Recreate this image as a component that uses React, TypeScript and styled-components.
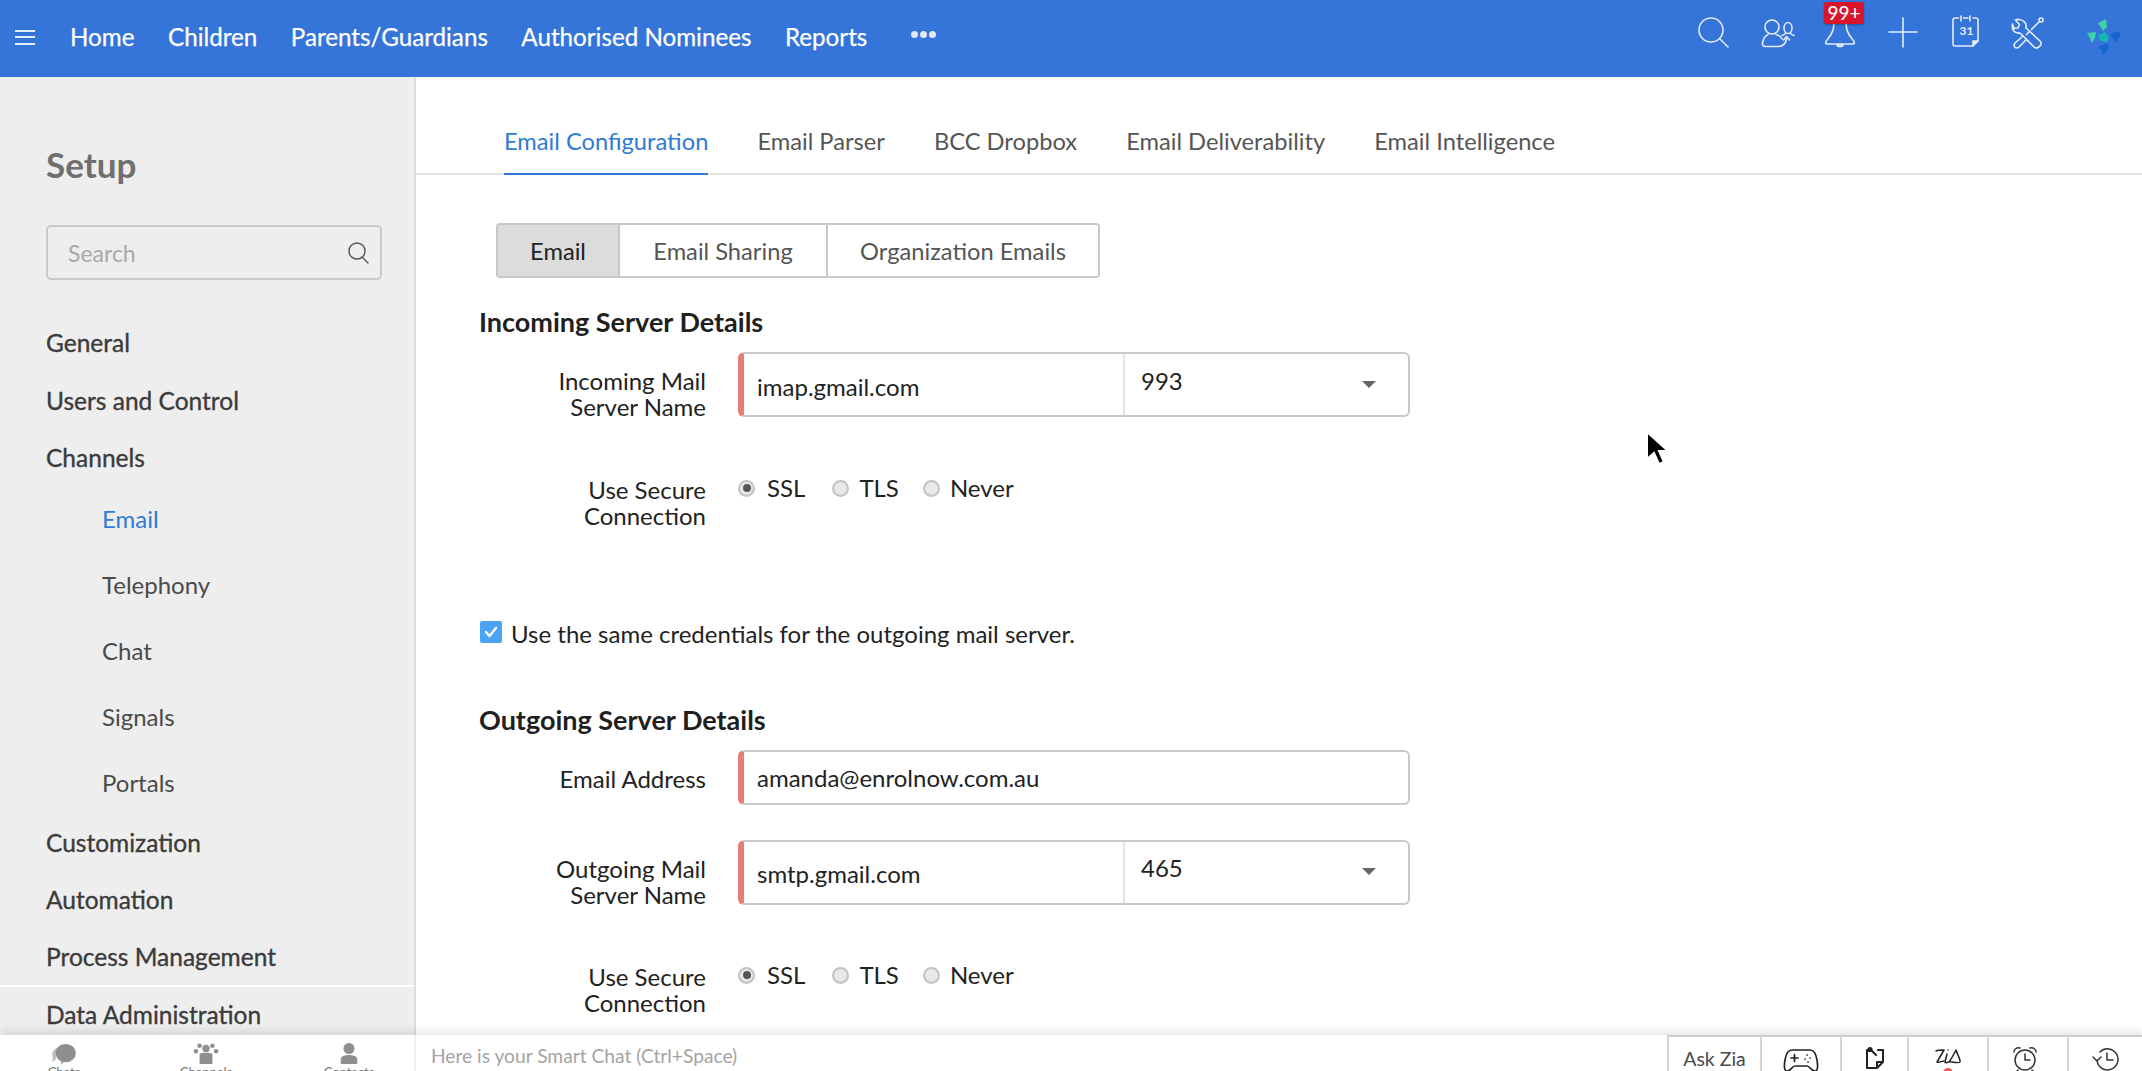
import React from 'react';
import styled, { createGlobalStyle } from 'styled-components';

const Global = createGlobalStyle`
  html, body { margin: 0; padding: 0; height: 100%; overflow: hidden; background: #fff; }
  body { font-family: Lato, "Open Sans", "Liberation Sans", sans-serif; color: #222; }
  * { box-sizing: border-box; }
`;

const Page = styled.div`
  position: relative;
  width: 2142px;
  height: 1071px;
  display: flex;
  flex-direction: column;
  overflow: hidden;
`;

const TopBar = styled.header`
  height: 77px;
  flex: none;
  background: #3574d8;
  display: flex;
  align-items: flex-start;
  color: #fff;
`;
const Burger = styled.div`
  width: 20px;
  height: 15px;
  margin: 30px 0 0 15px;
  border-top: 2px solid #e6eefb;
  border-bottom: 2px solid #e6eefb;
  position: relative;
  &::after {
    content: '';
    position: absolute;
    left: 0;
    right: 0;
    top: 4px;
    height: 2px;
    background: #e6eefb;
  }
`;
const Nav = styled.nav`
  display: flex;
  gap: 33.5px;
  margin: 22px 0 0 35px;
  align-items: center;
  height: 30px;
`;
const NavItem = styled.a`
  font-size: 24.2px;
  line-height: 30px;
  font-weight: 400;
  -webkit-text-stroke: 0.25px #fff;
  color: #fff;
  white-space: nowrap;
`;
const MoreDots = styled.div`
  display: flex;
  gap: 2px;
  margin-left: 10px;
  margin-top: -6px;
`;
const Dot = styled.span`
  width: 7px;
  height: 7px;
  border-radius: 50%;
  background: #dfe8f8;
`;
const TopIcons = styled.div`
  margin-left: auto;
  height: 77px;
  display: flex;
  align-items: flex-start;
`;
const TopIcon = styled.div<{ $w: number; $pl?: number; $pt?: number }>`
  position: relative;
  width: ${p => p.$w}px;
  padding-top: ${p => p.$pt ?? 15}px;
  padding-left: ${p => p.$pl ?? 0}px;
  display: flex;
  justify-content: center;
`;
const Badge = styled.span`
  position: absolute;
  top: 2px;
  left: calc(50% + 4px);
  transform: translateX(-50%);
  width: 40px;
  height: 22px;
  background: #d8152b;
  border-radius: 3px;
  font-size: 19px;
  line-height: 22px;
  font-weight: 500;
  text-align: center;
  color: #fff;
  box-shadow: 0 1px 2px rgba(0, 0, 0, 0.3);
`;

const Body = styled.div`
  flex: 1;
  min-height: 0;
  display: flex;
`;
const Sidebar = styled.aside`
  width: 416px;
  flex: none;
  background: #eeeeee;
  border-right: 2px solid #dcdcdc;
  padding: 65px 0 0 46px;
  overflow: hidden;
  position: relative;
`;
const SetupTitle = styled.h1`
  margin: 0;
  font-size: 35px;
  line-height: 44px;
  font-weight: 700;
  color: #6f6f6f;
`;
const SearchBox = styled.div`
  width: 336px;
  height: 55px;
  margin-top: 39px;
  border: 2px solid #c9c9c9;
  border-radius: 5px;
  display: flex;
  align-items: center;
  justify-content: space-between;
  padding: 0 10px 0 20px;
`;
const SearchHint = styled.span`
  font-size: 23px;
  color: #a8a8a8;
`;
const SideList = styled.div`
  display: flex;
  flex-direction: column;
  margin-top: 34px;
`;
const SideGroup = styled.div<{ $h: number }>`
  height: ${p => p.$h}px;
  line-height: ${p => p.$h}px;
  font-size: 24.5px;
  font-weight: 400;
  -webkit-text-stroke: 0.35px #3b3b3b;
  color: #3b3b3b;
  white-space: nowrap;
`;
const SideChild = styled.div<{ $active?: boolean; $h: number }>`
  height: ${p => p.$h}px;
  line-height: ${p => p.$h}px;
  padding-left: 56px;
  font-size: 24px;
  color: ${p => (p.$active ? '#2f7bd5' : '#4a4a4a')};
`;
const SideRule = styled.div`
  height: 2px;
  background: #fff;
  margin-left: -46px;
  margin-top: 1px;
`;

const Main = styled.main`
  flex: 1;
  min-width: 0;
  overflow: hidden;
  background: #fff;
`;
const Tabs = styled.div`
  height: 98px;
  border-bottom: 2px solid #e4e4e4;
  padding-left: 88px;
  display: flex;
  align-items: flex-end;
  gap: 49px;
`;
const Tab = styled.div<{ $active?: boolean }>`
  height: 66px;
  margin-bottom: -2px;
  line-height: 64px;
  font-size: 23.7px;
  white-space: nowrap;
  color: ${p => (p.$active ? '#2f7bd5' : '#555')};
  border-bottom: 2px solid ${p => (p.$active ? '#2f7bd5' : 'transparent')};
`;
const Form = styled.div`
  padding-left: 63px;
`;
const SubTabs = styled.div`
  display: inline-flex;
  margin: 48px 0 0 17px;
  height: 55px;
  border: 2px solid #c8c8c8;
  border-radius: 4px;
  overflow: hidden;
  vertical-align: top;
`;
const SubTab = styled.div<{ $active?: boolean; $w: number }>`
  width: ${p => p.$w}px;
  line-height: 53px;
  text-align: center;
  font-size: 23.7px;
  color: ${p => (p.$active ? '#222' : '#555')};
  background: ${p => (p.$active ? '#dcdcdc' : '#fff')};
  border-right: 2px solid #c8c8c8;
  &:last-child { border-right: 0; }
`;
const Heading = styled.h2<{ $mt: number }>`
  margin: ${p => p.$mt}px 0 0;
  font-size: 27px;
  line-height: 30px;
  font-weight: 700;
  color: #1f1f1f;
`;
const Row = styled.div<{ $mt: number }>`
  display: grid;
  grid-template-columns: 227px 672px;
  column-gap: 32px;
  margin-top: ${p => p.$mt}px;
`;
const Label = styled.label<{ $pt: number }>`
  display: block;
  text-align: right;
  margin-top: -1px;
  padding-top: ${p => p.$pt}px;
  font-size: 24px;
  line-height: 26px;
  color: #222;
`;
const Field = styled.div<{ $h: number }>`
  height: ${p => p.$h}px;
  display: flex;
  background: #fff;
  border: 2px solid #c6cacd;
  border-left: 6px solid #e87d78;
  border-radius: 6px;
  overflow: hidden;
  font-size: 24px;
  color: #222;
`;
const FieldText = styled.div<{ $pt: number }>`
  flex: 1;
  min-width: 0;
  padding: ${p => p.$pt}px 0 0 13px;
  line-height: 28px;
`;
const PortSelect = styled.div<{ $pt: number }>`
  width: 285px;
  flex: none;
  border-left: 2px solid #e4e4e4;
  padding: ${p => p.$pt}px 0 0 16px;
  line-height: 28px;
  position: relative;
`;
const Caret = styled.span<{ $top: number }>`
  position: absolute;
  right: 32px;
  top: ${p => p.$top}px;
  width: 0;
  height: 0;
  border-left: 7px solid transparent;
  border-right: 7px solid transparent;
  border-top: 7px solid #666;
`;
const Radios = styled.div`
  display: flex;
  align-items: center;
  height: 20px;
`;
const RadioDot = styled.span<{ $on?: boolean; $ml: number }>`
  width: 17px;
  height: 17px;
  margin-left: ${p => p.$ml}px;
  border-radius: 50%;
  border: 2px solid #c3c3c3;
  background: #e9e9e9;
  box-shadow: inset 0 -1px 1px rgba(0, 0, 0, 0.06);
  flex: none;
  position: relative;
  ${p =>
    p.$on
      ? `&::after { content: ''; position: absolute; left: 2.5px; top: 2.5px; width: 8px; height: 8px; border-radius: 50%; background: #555; }`
      : ''}
`;
const RadioText = styled.span<{ $ml: number }>`
  margin-left: ${p => p.$ml}px;
  font-size: 24px;
  line-height: 20px;
  color: #222;
`;
const CheckRow = styled.div`
  display: flex;
  align-items: center;
  margin-top: 91px;
  height: 26px;
`;
const CheckBox = styled.span`
  width: 22px;
  height: 22px;
  background: #4ba3f5;
  border-radius: 2px;
  display: flex;
  align-items: center;
  justify-content: center;
  margin: -2px 9px 0 1px;
`;
const CheckText = styled.span`
  font-size: 24px;
  color: #222;
`;

const Footer = styled.footer`
  height: 36px;
  flex: none;
  display: flex;
  background: #fff;
  overflow: hidden;
  position: relative;
  box-shadow: 0 -4px 8px rgba(0, 0, 0, 0.1);
`;
const FooterTabs = styled.div`
  width: 416px;
  flex: none;
  border-right: 2px solid #f0f0f0;
  display: grid;
  grid-template-columns: 128px 156px 130px;
`;
const FooterTab = styled.div`
  display: flex;
  flex-direction: column;
  align-items: center;
  padding-top: 8px;
  font-size: 13px;
  line-height: 14px;
  color: #777;
`;
const ChatHint = styled.div`
  flex: 1;
  padding: 8px 0 0 15px;
  font-size: 19.2px;
  line-height: 26px;
  color: #a3a3a3;
`;
const FooterCell = styled.div<{ $w: number; $pt?: number; $pr?: number }>`
  width: ${p => p.$w}px;
  flex: none;
  border-left: 2px solid #d4d4d4;
  border-top: 2px solid #cfcfcf;
  display: flex;
  justify-content: center;
  padding-top: ${p => p.$pt ?? 9}px;
  padding-right: ${p => p.$pr ?? 0}px;
  font-size: 19.5px;
  line-height: 26px;
  color: #4a4a4a;
  position: relative;
`;
const RedDot = styled.span`
  position: absolute;
  left: 50%;
  bottom: -3px;
  margin-left: -4px;
  width: 8px;
  height: 6px;
  border-radius: 50%;
  background: #ea5a5a;
`;
const Cursor = styled.svg`
  position: absolute;
  left: 1644px;
  top: 429px;
`;

const Stroke: React.FC<{ w?: number; h?: number; vb?: string; sw?: number; c?: string; children: React.ReactNode }> = ({
  w = 32, h = 32, vb = '0 0 32 32', sw = 1.6, c = '#e3ecfa', children,
}) => (
  <svg width={w} height={h} viewBox={vb} fill="none" stroke={c} strokeWidth={sw} strokeLinecap="round" strokeLinejoin="round" overflow="visible">
    {children}
  </svg>
);

const FieldRow: React.FC<{ label: React.ReactNode; value: string; port?: string; h: number; tp: number; pp?: number; cp?: number }> = ({
  label, value, port, h, tp, pp = 0, cp = 0,
}) => (
  <>
    <Label $pt={17}>{label}</Label>
    <Field $h={h}>
      <FieldText $pt={tp}>{value}</FieldText>
      {port && (
        <PortSelect $pt={pp}>
          {port}
          <Caret $top={cp} />
        </PortSelect>
      )}
    </Field>
  </>
);

const SecureRow: React.FC<{ mt: number }> = ({ mt }) => (
  <Row $mt={mt}>
    <Label $pt={0}>Use Secure<br />Connection</Label>
    <Radios>
      <RadioDot $on $ml={0} /><RadioText $ml={12}>SSL</RadioText>
      <RadioDot $ml={27} /><RadioText $ml={10}>TLS</RadioText>
      <RadioDot $ml={24} /><RadioText $ml={10}>Never</RadioText>
    </Radios>
  </Row>
);

export default function App() {
  return (
    <Page>
      <Global />
      <TopBar>
        <Burger />
        <Nav>
          <NavItem>Home</NavItem>
          <NavItem>Children</NavItem>
          <NavItem>Parents/Guardians</NavItem>
          <NavItem>Authorised Nominees</NavItem>
          <NavItem>Reports</NavItem>
          <MoreDots><Dot /><Dot /><Dot /></MoreDots>
        </Nav>
        <TopIcons>
          <TopIcon $w={64}>
            <Stroke><circle cx="14" cy="15" r="12" /><path d="M23 24l8 8" /></Stroke>
          </TopIcon>
          <TopIcon $w={64}>
            <Stroke>
              <circle cx="11" cy="12" r="7" />
              <path d="M7 19.500C4 21 2 25 1.500 28C1 31 3 31.500 5 31.500H17C22 31.500 24.500 29 25.500 24" />
              <path d="M15 19.500C17.500 20 20 22 21 24M22.500 25l3-3.500 3 3.500" />
              <ellipse cx="27" cy="13" rx="4" ry="5.500" />
              <path d="M24.500 18c-.5 1-2 2-3.500 2.500M29.500 18c.5 1 2 2 3.500 2.500" />
            </Stroke>
          </TopIcon>
          <TopIcon $w={62}>
            <Stroke>
              <path d="M10 5C10 14 9 18 3 25C1 27 1 29 4 29H28C31 29 31 27 29 25C23 18 22 14 22 5" />
              <path d="M13 30c.5 2 5.500 2 6 0z" fill="#e3ecfa" />
            </Stroke>
            <Badge>99+</Badge>
          </TopIcon>
          <TopIcon $w={63}>
            <Stroke><path d="M16 3v29M2 17h28" /></Stroke>
          </TopIcon>
          <TopIcon $w={62}>
            <Stroke>
              <path d="M9.500 3H6C4.500 3 4 4 4 5V29C4 30.500 5 31 6 31H24L29 26V5C29 4 28 3 27 3H24M14.500 3H19M12 1v5M21 1v5" />
              <path d="M24 31V26H29" fill="#e3ecfa" />
              <text x="10.500" y="20" fontFamily="Lato, sans-serif" fontSize="12" fontWeight="700" fill="#e3ecfa" stroke="none">31</text>
            </Stroke>
          </TopIcon>
          <TopIcon $w={62}>
            <Stroke>
              <path d="M13 6.500C10 4 6 4 4.500 5L8.500 9.500 7 13 3 13.500 1.500 9C.5 14 3 19 9 18L23 32C26 35 32 30 29.500 26.500L15 13C15.500 10 15 8 13 6.500Z" />
              <path d="M20.500 14.500L28.500 6.500M18 17l-2.500 2.500M12 21L4 28C1.500 31 5 35 8 32L15.500 24.500" />
              <circle cx="30" cy="5" r="2" />
            </Stroke>
          </TopIcon>
          <TopIcon $w={84} $pl={10} $pt={10}>
            <svg width="50" height="50" viewBox="0 0 50 50">
              <polygon points="18,13 26,9 27,17 23,21 20,16" fill="#3ed4a8" />
              <polygon points="7,23 16,22 15,28 12,33 10,28" fill="#3ed4a8" />
              <polygon points="18,25 25,22 29,27 27,33 20,30" fill="#17b4b8" />
              <polygon points="30,25 38,21 41,25 35,33 33,28" fill="#1565cc" />
              <polygon points="18,37 27,33 29,38 23,45 22,40" fill="#1565cc" />
            </svg>
          </TopIcon>
        </TopIcons>
      </TopBar>
      <Body>
        <Sidebar>
          <SetupTitle>Setup</SetupTitle>
          <SearchBox>
            <SearchHint>Search</SearchHint>
            <Stroke w={24} h={24} vb="0 0 24 24" sw={1.4} c="#555">
              <circle cx="11" cy="10" r="8" /><path d="M16 16l6 6" />
            </Stroke>
          </SearchBox>
          <SideList>
            <SideGroup $h={57}>General</SideGroup>
            <SideGroup $h={59}>Users and Control</SideGroup>
            <SideGroup $h={56}>Channels</SideGroup>
            <SideChild $active $h={66}>Email</SideChild>
            <SideChild $h={66}>Telephony</SideChild>
            <SideChild $h={66}>Chat</SideChild>
            <SideChild $h={66}>Signals</SideChild>
            <SideChild $h={66}>Portals</SideChild>
            <SideGroup $h={54}>Customization</SideGroup>
            <SideGroup $h={60}>Automation</SideGroup>
            <SideGroup $h={54}>Process Management</SideGroup>
            <SideRule />
            <SideGroup $h={56}>Data Administration</SideGroup>
          </SideList>
        </Sidebar>
        <Main>
          <Tabs>
            <Tab $active>Email Configuration</Tab>
            <Tab>Email Parser</Tab>
            <Tab>BCC Dropbox</Tab>
            <Tab>Email Deliverability</Tab>
            <Tab>Email Intelligence</Tab>
          </Tabs>
          <Form>
            <SubTabs>
              <SubTab $active $w={122}>Email</SubTab>
              <SubTab $w={208}>Email Sharing</SubTab>
              <SubTab $w={270}>Organization Emails</SubTab>
            </SubTabs>
            <Heading $mt={29}>Incoming Server Details</Heading>
            <Row $mt={15}>
              <FieldRow label={<>Incoming Mail<br />Server Name</>} value="imap.gmail.com" port="993" h={65} tp={19} pp={13} cp={27} />
            </Row>
            <SecureRow mt={58} />
            <CheckRow>
              <CheckBox>
                <Stroke w={14} h={14} vb="0 0 14 14" sw={2.4} c="#fff"><path d="M2 7l3.500 4L12 3" /></Stroke>
              </CheckBox>
              <CheckText>Use the same credentials for the outgoing mail server.</CheckText>
            </CheckRow>
            <Heading $mt={59}>Outgoing Server Details</Heading>
            <Row $mt={15}>
              <FieldRow label="Email Address" value="amanda@enrolnow.com.au" h={55} tp={12} />
            </Row>
            <Row $mt={35}>
              <FieldRow label={<>Outgoing Mail<br />Server Name</>} value="smtp.gmail.com" port="465" h={65} tp={18} pp={12} cp={26} />
            </Row>
            <SecureRow mt={57} />
          </Form>
        </Main>
      </Body>
      <Footer>
        <FooterTabs>
          <FooterTab>
            <svg width="30" height="22" viewBox="0 0 30 24">
              <path d="M8 5C3 7 1 11 3 16l-1 5 4-3z" fill="#bdbdbd" />
              <path d="M17 1a11 10 0 0 1 0 20l-3 0-2 3 0-4A11 10 0 0 1 17 1z" fill="#8f8f8f" />
            </svg>
            Chats
          </FooterTab>
          <FooterTab>
            <svg width="30" height="22" viewBox="0 0 30 24" fill="#8f8f8f">
              <circle cx="8" cy="3" r="2.500" /><circle cx="22" cy="3" r="2.500" />
              <circle cx="15" cy="6" r="4" />
              <path d="M8 12c0-2 14-2 14 0v11H8z" />
              <circle cx="4" cy="9" r="2.500" /><circle cx="26" cy="9" r="2.500" />
            </svg>
            Channels
          </FooterTab>
          <FooterTab>
            <svg width="30" height="22" viewBox="0 0 30 24" fill="#8f8f8f">
              <circle cx="15" cy="6" r="6" />
              <path d="M6 23v-5c0-4 5-5 9-5s9 1 9 5v5z" />
            </svg>
            Contacts
          </FooterTab>
        </FooterTabs>
        <ChatHint>Here is your Smart Chat (Ctrl+Space)</ChatHint>
        <FooterCell $w={93}>Ask Zia</FooterCell>
        <FooterCell $w={80} $pt={10}>
          <Stroke w={36} h={26} vb="0 0 36 26" sw={1.700} c="#222">
            <path d="M9 3h18c4 0 6 4 7 10 1 6 1 11-2 11-4 0-5-5-8-5H12c-3 0-4 5-8 5-3 0-3-5-2-11C3 7 5 3 9 3z" />
            <path d="M8 11h7M11.500 7.500v7M24 8h.1M27 11h.1M22 12h.1M25 15h.1" />
          </Stroke>
        </FooterCell>
        <FooterCell $w={67} $pt={10}>
          <Stroke w={20} h={24} vb="0 0 20 24" sw={2} c="#222">
            <path d="M6 3H2v18h10l6-6V3h-5M12 21v-6h6M6 3l5 5" />
            <circle cx="5" cy="2.500" r="1.600" fill="#222" />
          </Stroke>
        </FooterCell>
        <FooterCell $w={80} $pt={11}>
          <Stroke w={26} h={17} vb="0 0 26 17" sw={1.500} c="#222">
            <path d="M1 3C3 2 6 2 9 2L2 14C4 15 7 13 9 13" />
            <path d="M12 6L10 14C10 15 12 15 13 14M13 2h.1" />
            <path d="M14 14C17 10 20 4 21 2C22 6 26 12 25 14C22 16 17 13 14 14" />
          </Stroke>
          <RedDot />
        </FooterCell>
        <FooterCell $w={80} $pr={6}>
          <Stroke w={26} h={26} vb="0 0 26 26" sw={1.500} c="#333">
            <circle cx="13" cy="14" r="10" />
            <path d="M13 8v6h5M2 6c0-3 3-5 6-4M24 6c0-3-3-5-6-4M6 24l-2 2M20 24l2 2" />
          </Stroke>
        </FooterCell>
        <FooterCell $w={75}>
          <Stroke w={28} h={26} vb="0 0 28 26" sw={1.500} c="#333">
            <path d="M5 14a10.500 10.500 0 1 0 3-8M1 11l4 4 4-4M15 7v7h6" />
          </Stroke>
        </FooterCell>
      </Footer>
      <Cursor width="26" height="38" viewBox="0 0 26 38">
        <path d="M3 3v27l7-6 5 11 5-2-5-11h9z" fill="#000" stroke="#fff" strokeWidth="2" />
      </Cursor>
    </Page>
  );
}
